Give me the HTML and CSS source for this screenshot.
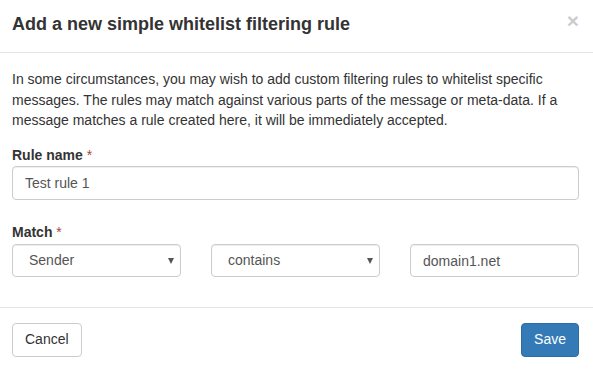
FILE: index.html
```html
<!DOCTYPE html>
<html>
<head>
<meta charset="utf-8">
<link rel="stylesheet" href="styles.css">
</head>
<body>
<div class="modal">
  <div class="modal-header">
    <h4 class="modal-title">Add a new simple whitelist filtering rule</h4>
    <button class="close" type="button">&times;</button>
  </div>
  <div class="modal-body">
    <p class="intro">In some circumstances, you may wish to add custom filtering rules to whitelist specific messages. The rules may match against various parts of the message or meta-data. If a message matches a rule created here, it will be immediately accepted.</p>
    <div class="form-group form-group-name">
      <label class="label">Rule name <span class="req">*</span></label>
      <input class="form-control" type="text" value="Test rule 1">
    </div>
    <div class="form-group">
      <label class="label">Match <span class="req">*</span></label>
      <div class="match-row">
        <div class="select-wrap">
          <select class="form-control select"><option>Sender</option></select>
          <span class="caret"></span>
        </div>
        <div class="select-wrap">
          <select class="form-control select"><option>contains</option></select>
          <span class="caret"></span>
        </div>
        <input class="form-control" type="text" value="domain1.net">
      </div>
    </div>
  </div>
  <div class="modal-footer">
    <button class="btn btn-default" type="button">Cancel</button>
    <button class="btn btn-primary" type="button">Save</button>
  </div>
</div>
</body>
</html>
```
FILE: styles.css
```css
* { box-sizing: border-box; }
html, body { margin: 0; padding: 0; background: #fff; }
body {
  font-family: "Liberation Sans", Arial, Helvetica, sans-serif;
  font-size: 14px;
  line-height: 1.42857;
  color: #333;
  width: 593px;
}
.modal { width: 593px; }
.modal-header {
  display: flex;
  justify-content: space-between;
  align-items: flex-start;
  padding: 13px 12px 16px 12px;
  border-bottom: 1px solid #e5e5e5;
}
.modal-title {
  margin: 0;
  font-size: 18px;
  font-weight: bold;
  line-height: 23px;
}
.close {
  background: none;
  border: 0;
  padding: 0;
  margin: -3px 2px 0 0;
  font-family: "Liberation Sans", Arial, sans-serif;
  font-size: 21px;
  font-weight: bold;
  line-height: 1;
  color: #000;
  opacity: 0.2;
  text-shadow: 0 1px 0 #fff;
  cursor: pointer;
}
.modal-body {
  padding: 16px 14px 15px 12px;
}
.intro { margin: 0 0 15px 0; line-height: 20.5px; }
.form-group { margin-bottom: 15px; }
.form-group-name { margin-bottom: 23px; }
.label {
  display: block;
  font-weight: bold;
  margin-bottom: 1px;
}
.req { color: #a94442; font-weight: normal; }
.form-control {
  display: block;
  width: 100%;
  height: 34px;
  padding: 6px 12px;
  font-family: inherit;
  font-size: 14px;
  line-height: 1.42857;
  color: #555;
  background: #fff;
  border: 1px solid #ccc;
  border-radius: 4px;
  box-shadow: inset 0 1px 1px rgba(0,0,0,0.075);
  margin: 0;
}
.match-row {
  display: grid;
  grid-template-columns: 1fr 1fr 1fr;
  column-gap: 30px;
}
.select-wrap { position: relative; }
.select {
  -webkit-appearance: none;
  appearance: none;
  padding-left: 16px;
  height: 33px;
}
.caret {
  position: absolute;
  right: 5px;
  top: 14px;
  width: 0;
  height: 0;
  border-left: 3.5px solid transparent;
  border-right: 3.5px solid transparent;
  border-top: 6px solid #555;
  margin-right: 2px;
}
.match-row input.form-control { height: 33px; }
.modal-footer {
  display: flex;
  justify-content: space-between;
  padding: 15px 14px 15px 12px;
  border-top: 1px solid #e5e5e5;
}
.btn {
  font-family: inherit;
  font-size: 14px;
  line-height: 1.42857;
  padding: 6px 12px;
  border: 1px solid transparent;
  border-radius: 4px;
  cursor: pointer;
  height: 34px;
}
.btn-default { background: #fff; color: #333; border-color: #ccc; }
.btn-primary { background: #337ab7; color: #fff; border-color: #2e6da4; }
```
